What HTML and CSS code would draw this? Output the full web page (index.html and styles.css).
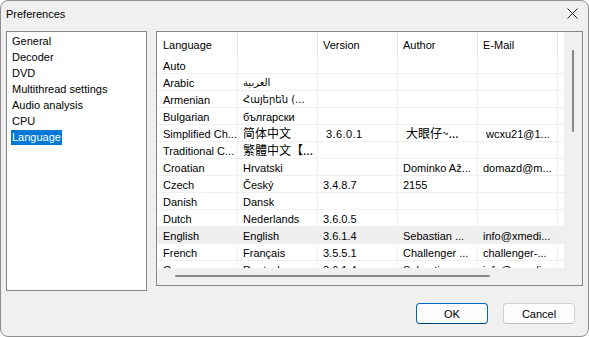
FILE: index.html
```html
<!DOCTYPE html>
<html>
<head>
<meta charset="utf-8">
<link rel="stylesheet" href="styles.css">
</head>
<body>
<div class="window">
  <div class="titlebar">
    <span class="title">Preferences</span>
    <svg class="close" width="11" height="11" viewBox="0 0 11 11"><path d="M0.5 0.5 L10.5 10.5 M10.5 0.5 L0.5 10.5" stroke="#1a1a1a" stroke-width="1"/></svg>
  </div>
  <div class="main">
    <ul class="nav">
      <li><span>General</span></li>
      <li><span>Decoder</span></li>
      <li><span>DVD</span></li>
      <li><span>Multithread settings</span></li>
      <li><span>Audio analysis</span></li>
      <li><span>CPU</span></li>
      <li><span class="sel">Language</span></li>
    </ul>
    <div class="listview">
      <div class="grid">
        <div class="hrow">
          <div class="c">Language</div><div class="c"></div><div class="c">Version</div><div class="c">Author</div><div class="c">E-Mail</div><div class="fill"></div>
        </div>
        <div class="row"><div class="c">Auto</div><div class="c"></div><div class="c"></div><div class="c"></div><div class="c"></div><div class="fill"></div></div>
        <div class="row"><div class="c">Arabic</div><div class="c intl">العربية</div><div class="c"></div><div class="c"></div><div class="c"></div><div class="fill"></div></div>
        <div class="row"><div class="c">Armenian</div><div class="c intl">Հայերեն (...</div><div class="c"></div><div class="c"></div><div class="c"></div><div class="fill"></div></div>
        <div class="row"><div class="c">Bulgarian</div><div class="c">български</div><div class="c"></div><div class="c"></div><div class="c"></div><div class="fill"></div></div>
        <div class="row"><div class="c">Simplified Ch...</div><div class="c cjk">简体中文</div><div class="c wide spaced">3.6.0.1</div><div class="c cjk wide">大眼仔~...</div><div class="c wide">wcxu21@1...</div><div class="fill"></div></div>
        <div class="row"><div class="c">Traditional C...</div><div class="c cjk">繁體中文【...</div><div class="c"></div><div class="c"></div><div class="c"></div><div class="fill"></div></div>
        <div class="row"><div class="c">Croatian</div><div class="c">Hrvatski</div><div class="c"></div><div class="c">Dominko Až...</div><div class="c">domazd@m...</div><div class="fill"></div></div>
        <div class="row"><div class="c">Czech</div><div class="c">Český</div><div class="c">3.4.8.7</div><div class="c">2155</div><div class="c"></div><div class="fill"></div></div>
        <div class="row"><div class="c">Danish</div><div class="c">Dansk</div><div class="c"></div><div class="c"></div><div class="c"></div><div class="fill"></div></div>
        <div class="row"><div class="c">Dutch</div><div class="c">Nederlands</div><div class="c">3.6.0.5</div><div class="c"></div><div class="c"></div><div class="fill"></div></div>
        <div class="row hot"><div class="c">English</div><div class="c">English</div><div class="c">3.6.1.4</div><div class="c">Sebastian ...</div><div class="c">info@xmedi...</div><div class="fill"></div></div>
        <div class="row"><div class="c">French</div><div class="c">Français</div><div class="c">3.5.5.1</div><div class="c">Challenger ...</div><div class="c">challenger-...</div><div class="fill"></div></div>
        <div class="row"><div class="c">German</div><div class="c">Deutsch</div><div class="c">3.6.1.4</div><div class="c">Sebastian ...</div><div class="c">info@xmedi...</div><div class="fill"></div></div>
      </div>
      <div class="vscroll"><div class="vthumb"></div></div>
      <div class="hscroll"><div class="hthumb"></div></div>
      <div class="corner"></div>
    </div>
  </div>
  <div class="buttons">
    <button class="btn primary">OK</button>
    <button class="btn">Cancel</button>
  </div>
</div>
</body>
</html>
```
FILE: styles.css
```css
* { box-sizing: border-box; }
html, body { margin: 0; padding: 0; background: #ffffff; }
body {
  font-family: "Liberation Sans", Arial, sans-serif;
  font-size: 11px;
  color: #000;
}
.window {
  width: 589px;
  height: 337px;
  border: 1px solid #8f8f8f;
  border-radius: 8px;
  background: #f0f0f0;
  display: flex;
  flex-direction: column;
  overflow: hidden;
}
.titlebar {
  height: 30px;
  flex: none;
  display: flex;
  align-items: flex-start;
  padding-left: 5px;
}
.title { line-height: 26px; }
.close { margin-left: auto; margin-right: 10px; margin-top: 7px; }
.main {
  display: flex;
  align-items: flex-start;
  gap: 9px;
  padding-left: 5px;
}
.nav {
  width: 141px;
  height: 260px;
  flex: none;
  margin: 0;
  padding: 1px 0 0 4px;
  list-style: none;
  background: #fff;
  border: 1px solid #828790;
}
.nav li { height: 16px; line-height: 16px; }
.nav span { display: inline-block; padding: 0 1px; }
.nav .sel { background: #0078d7; color: #fff; line-height: 15px; margin-top: 1px; }
.listview {
  width: 427px;
  height: 255px;
  flex: none;
  border: 1px solid #828790;
  background: #f0f0f0;
  display: grid;
  grid-template-columns: 407px 1fr;
  grid-template-rows: 236px 1fr;
}
.grid { background: #fff; overflow: hidden; }
.hrow { display: flex; height: 25px; }
.hrow .c { border-right-color: #e5e5e5; line-height: 24px; padding-top: 1px; }
.row { display: flex; height: 17px; border-bottom: 1px solid #f0f0f0; }
.row .c { line-height: 16px; padding-top: 1px; }
.row.hot { background: #efefef; }
.row.hot .c { border-right-color: #efefef; }
.c {
  flex: none;
  width: 80px;
  padding-left: 5px;
  border-right: 1px solid #f0f0f0;
  white-space: nowrap;
  overflow: hidden;
}
.c:first-child { width: 81px; padding-left: 6px; }
.fill { flex: 1; }
.intl { font-family: "DejaVu Sans", sans-serif; font-size: 10px; }
.row .cjk { font-family: "Noto Sans CJK SC", sans-serif; font-size: 12px; line-height: 16px; padding-top: 0; }
.row .wide { padding-left: 8px; }
.spaced { letter-spacing: 0.4px; }
.vscroll { padding: 18px 0 0 8px; }
.vthumb { width: 2px; height: 82px; background: #878787; border-radius: 1px; }
.hscroll { padding: 7px 0 0 18px; }
.hthumb { width: 315px; height: 2px; background: #878787; border-radius: 1px; }
.buttons {
  display: flex;
  justify-content: flex-end;
  gap: 15px;
  padding: 12px 13px 0 0;
}
.btn {
  width: 72px;
  height: 21px;
  padding: 0;
  font: inherit;
  color: #000;
  background: #fdfdfd;
  border: 1px solid #d0d0d0;
  border-bottom-color: #bfbfbf;
  border-radius: 4px;
}
.btn.primary { border-color: #0067c0; border-bottom-color: #00467f; }
```
